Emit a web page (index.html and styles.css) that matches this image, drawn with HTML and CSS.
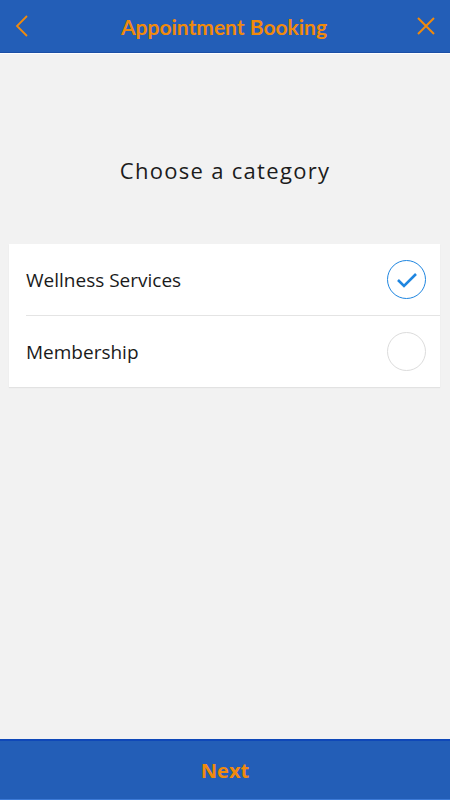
FILE: index.html
```html
<!DOCTYPE html>
<html lang="en">
<head>
  <meta charset="UTF-8">
  <meta name="viewport" content="width=device-width, initial-scale=1">
  <title>Appointment Booking</title>
  <link rel="stylesheet" href="styles.css">
</head>
<body>

  <header class="topbar">
    <button class="icon-btn" aria-label="Back">
      <svg width="14" height="24" viewBox="0 0 14 24"><path d="M12 2 L2 12 L12 22" fill="none" stroke="#f08a0c" stroke-width="1.8"/></svg>
    </button>
    <div class="title">Appointment Booking</div>
    <button class="icon-btn" aria-label="Close">
      <svg width="20" height="20" viewBox="0 0 20 20"><path d="M2 2 L18 18 M18 2 L2 18" fill="none" stroke="#f08a0c" stroke-width="2"/></svg>
    </button>
  </header>

  <main class="content">
    <h1>Choose a category</h1>

    <div class="list">
      <div class="row">
        <span>Wellness Services</span>
        <span class="radio checked">
          <svg width="22" height="18" viewBox="0 0 22 18"><path d="M2 9 L8 15 L20 3" fill="none" stroke="#1f86e0" stroke-width="2.6"/></svg>
        </span>
      </div>
      <div class="row">
        <span>Membership</span>
        <span class="radio"></span>
      </div>
    </div>
  </main>

  <footer class="bottombar">
    <button class="next-btn">Next</button>
  </footer>

</body>
</html>
```

FILE: styles.css
```css
body {
  margin: 0;
  font-family: 'Open Sans', sans-serif;
  background: #f2f2f2;
  height: 800px;
  display: flex;
  flex-direction: column;
}

.topbar {
  height: 52px;
  display: flex;
  align-items: center;
  justify-content: space-between;
  padding: 0 12px 0 10px;
  background: #235eb7;
  border-bottom: 1px solid #1b4fa6;
  box-shadow: 0 1px 0 #fff;
}

.icon-btn {
  background: none;
  border: none;
  padding: 0;
  width: 24px;
  height: 24px;
  display: flex;
  align-items: center;
  justify-content: center;
}

.title {
  font-family: 'Lato', sans-serif;
  font-weight: bold;
  font-size: 21px;
  color: #f08a0c;
  margin-top: 1px;
}

.content {
  flex: 1;
  padding-top: 102px;
}

h1 {
  margin: 0 0 59px;
  text-align: center;
  font-weight: normal;
  font-size: 22px;
  letter-spacing: 1.3px;
  color: #1c1c1c;
}

.list {
  margin: 0 10px 0 9px;
  background: #fff;
  box-shadow: 0 1px 1px #e2e2e2;
}

.row {
  height: 71px;
  margin-left: 17px;
  padding-right: 14px;
  display: flex;
  align-items: center;
  justify-content: space-between;
  font-size: 19px;
  color: #1a1a1a;
}

.row + .row {
  border-top: 1px solid #e4e4e4;
}

.radio {
  width: 37px;
  height: 37px;
  border-radius: 50%;
  border: 1.5px solid #dcdcdc;
  display: flex;
  align-items: center;
  justify-content: center;
}

.radio.checked {
  border-color: #1f86e0;
}

.radio svg {
  margin-top: 1px;
}

.bottombar {
  height: 58px;
  background: #235eb7;
  border-top: 2px solid #0f48b8;
  border-bottom: 1px solid #3d7ad6;
}

.next-btn {
  width: 100%;
  height: 100%;
  background: none;
  border: none;
  font-family: 'Open Sans', sans-serif;
  font-weight: bold;
  font-size: 20px;
  color: #f08a0c;
  cursor: pointer;
}
```
